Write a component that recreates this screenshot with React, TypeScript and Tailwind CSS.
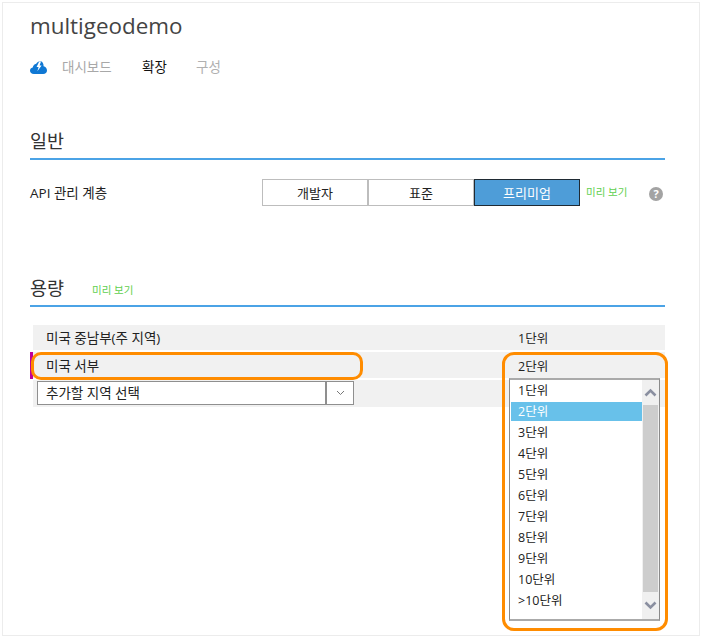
const units = ['1단위', '2단위', '3단위', '4단위', '5단위', '6단위', '7단위', '8단위', '9단위', '10단위', '>10단위'];

function Section({ title, preview }: { title: string; preview?: boolean }) {
  return (
    <div className="flex h-[32px] w-[635px] items-start gap-[28px] border-b-2 border-[#4ba3e6]">
      <span className="text-[18.5px] leading-[26px] text-[#333]">{title}</span>
      {preview && <span className="mt-[8px] text-[10.5px] leading-[14px] text-[#5fcf4f]">미리 보기</span>}
    </div>
  );
}

function Tier({ label, active }: { label: string; active?: boolean }) {
  return (
    <div className={`flex h-[27px] w-[106px] items-center justify-center border pt-[2px] text-[13px] ${active ? 'border-[#1f2a33] bg-[#4e9dd8] text-white' : 'border-[#bdbdbd] text-[#222]'}`}>
      {label}
    </div>
  );
}

export default function App() {
  return (
    <div className="relative h-[638px] w-[703px] bg-white p-[2px] text-[#222]" style={{ fontFamily: '"Open Sans", "Noto Sans CJK KR", sans-serif' }}>
      <div className="h-[634px] w-[698px] border border-[#ececec] pl-[27px] pt-[8px]">
        <h1 className="text-[22.4px] leading-[30px] text-[#444]">multigeodemo</h1>

        <div className="mt-[16px] flex h-[20px] items-center text-[13.5px]">
          <svg width="17" height="13" viewBox="0 0 17 13" className="mr-[15px]">
            <path d="M3.8 13C1.6 13 0 11.6 0 9.7 0 8.1 1.1 6.8 2.7 6.5 3.1 4.6 4.4 3.2 6.2 2.8 7.2.9 9 0 10.8.3 12.6.7 13.6 2.6 13.6 5.2 15.6 5.5 17 7.3 17 9.4 17 11.5 15.4 13 13.2 13Z" fill="#0f78d4" />
            <path d="M9.2.6L6.6 6H8.6L7.4 10.2 11.6 4.4H9.6L11 .6Z" fill="#fff" />
          </svg>
          <span className="w-[80px] text-[#a8a8a8]">대시보드</span>
          <span className="w-[54px] text-[#111]">확장</span>
          <span className="text-[#b0b0b0]">구성</span>
        </div>

        <div className="mt-[51px]">
          <Section title="일반" />
        </div>

        <div className="mt-[19px] flex h-[27px] items-center">
          <span className="w-[232px] pt-[2px] text-[13.5px] text-[#222]">API 관리 계층</span>
          <Tier label="개발자" />
          <Tier label="표준" />
          <Tier label="프리미엄" active />
          <span className="ml-[6px] w-[63px] text-[10.5px] text-[#5fcf4f]">미리 보기</span>
          <span className="mt-[2px] flex h-[14px] w-[14px] items-center justify-center rounded-full bg-[#a3a3a3] text-[11px] font-bold leading-none text-white">?</span>
        </div>

        <div className="mt-[69px]">
          <Section title="용량" preview />
        </div>

        <div className="ml-[3px] mt-[18px] w-[632px] text-[13.5px]">
          <div className="flex h-[25px] items-center bg-[#f1f1f1] pl-[13px] pt-[2px]">
            <span className="w-[472px]">미국 중남부(주 지역)</span>
            <span className="pt-[2px] text-[12.5px]">1단위</span>
          </div>
          <div className="mt-[2px] flex h-[26px] items-center bg-[#f1f1f1] pl-[13px] pt-[2px]">
            <span className="w-[472px]">미국 서부</span>
            <span className="pt-[2px] text-[12.5px]">2단위</span>
          </div>
          <div className="mt-[2px] flex h-[27px] bg-[#f1f1f1] pl-[4px] pt-[1px]">
            <div className="flex h-[24px] w-[317px] border border-[#8f8f8f] bg-white">
              <span className="flex-1 pl-[8px] leading-[22px]">추가할 지역 선택</span>
              <span className="flex w-[28px] items-center justify-center border-l-2 border-[#8f8f8f]">
                <svg width="9" height="6" viewBox="0 0 9 6">
                  <path d="M1 1l3.5 3.5L8 1" fill="none" stroke="#777" strokeWidth="1" />
                </svg>
              </span>
            </div>
          </div>
        </div>
      </div>

      {/* 펼쳐진 단위 목록 */}
      <div className="absolute left-[509px] top-[378px] flex h-[243px] w-[151px] border border-y-2 border-[#8a8a8a] border-y-[#aaa] bg-white text-[12.5px]">
        <div className="w-[132px] pl-px">
          {units.map((u, i) => (
            <div key={u} className={`flex h-[21px] items-center pl-[7px] pt-[2px] ${i === 1 ? 'border-y border-white bg-[#68c1ea] text-white' : ''}`}>
              {u}
            </div>
          ))}
        </div>
        <div className="flex w-[17px] flex-col bg-[#f0f0f0]">
          <div className="flex h-[25px] items-center justify-center">
            <svg width="13" height="9" viewBox="0 0 13 9">
              <path d="M1.5 7.5l5-5 5 5" fill="none" stroke="#8a8fa0" strokeWidth="2.6" />
            </svg>
          </div>
          <div className="mx-auto w-[15px] flex-1 bg-[#cdcdcd]" />
          <div className="flex h-[27px] items-center justify-center">
            <svg width="13" height="9" viewBox="0 0 13 9">
              <path d="M1.5 1.5l5 5 5-5" fill="none" stroke="#8a8fa0" strokeWidth="2.6" />
            </svg>
          </div>
        </div>
      </div>

      {/* 강조 표시 */}
      <div className="absolute left-[30px] top-[352px] h-[27px] w-[3px] bg-[#c0009a]" />
      <div className="absolute left-[31px] top-[352px] h-[28px] w-[332px] rounded-[10px] border-[3px] border-[#ff8c00]" />
      <div className="absolute left-[502px] top-[352px] h-[279px] w-[166px] rounded-[12px] border-[3px] border-[#ff8c00]" />
    </div>
  );
}
